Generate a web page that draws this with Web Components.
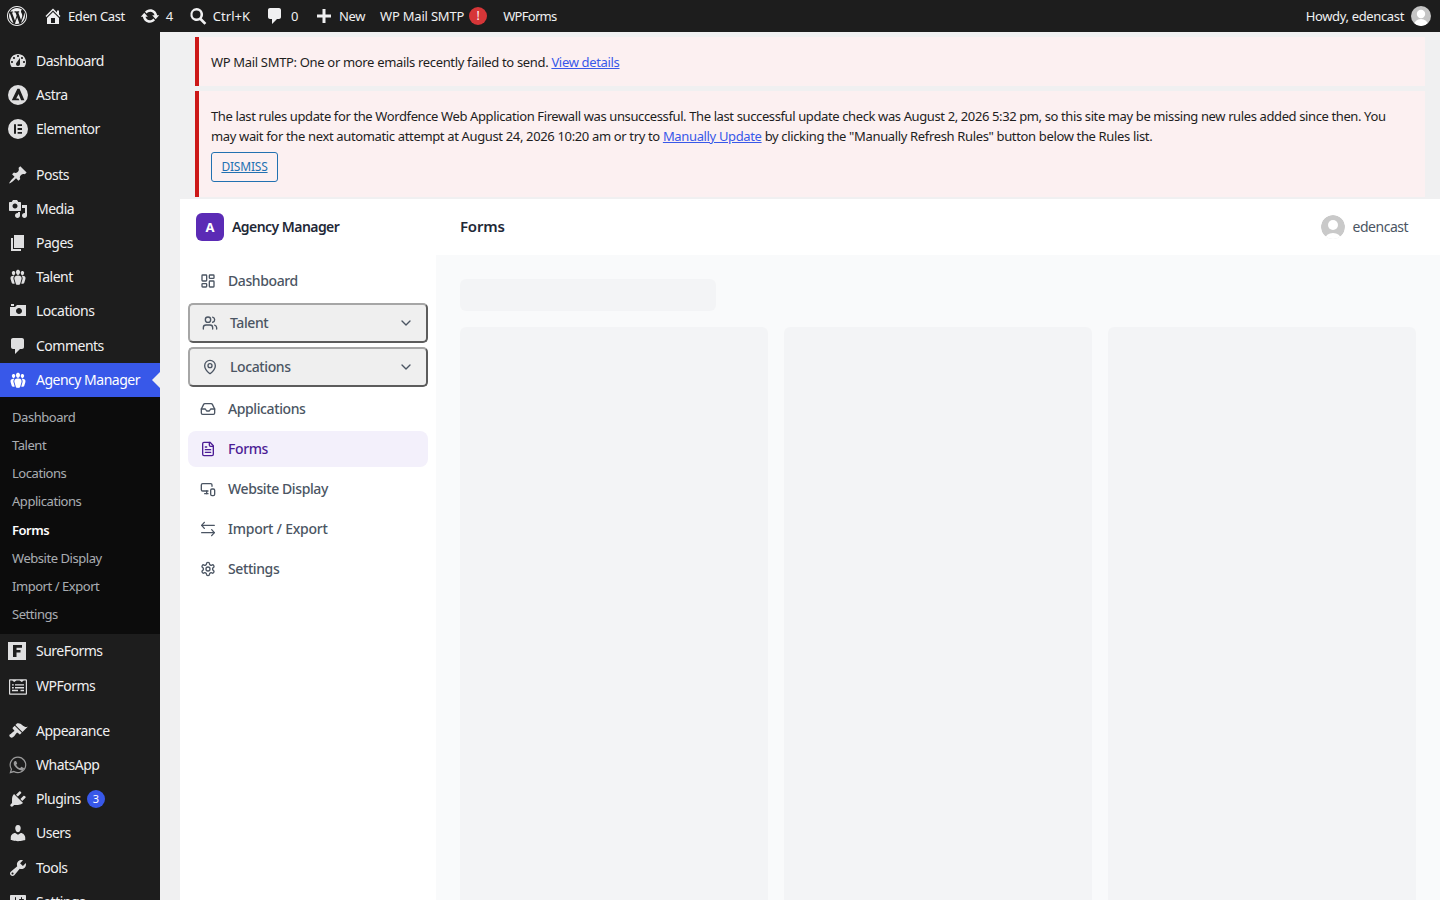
<!DOCTYPE html>
<html lang="en">
<head>
<meta charset="utf-8">
<title>Forms</title>
<style>
  html, body { margin: 0; padding: 0; height: 100%; overflow: hidden; background: #f0f0f1; }
  body { font-family: "Noto Sans", "Open Sans", sans-serif; font-size: 13px; color: #3c434a; }
  #wrap { display: grid; grid-template-columns: 160px 1fr; grid-template-rows: 32px 868px; height: 900px; overflow: hidden; }
  wp-adminbar { grid-column: 1 / 3; }
</style>
</head>
<body>
<div id="wrap">
  <wp-adminbar></wp-adminbar>
  <wp-adminmenu></wp-adminmenu>
  <main>
    <wp-notice>WP Mail SMTP: One or more emails recently failed to send. <a href="#">View details</a></wp-notice>
    <wp-notice dismiss>The last rules update for the Wordfence Web Application Firewall was unsuccessful. The last successful update check was August 2, 2026 5:32 pm, so this site may be missing new rules added since then. You<br><span style="letter-spacing:-.35px">may wait for the next automatic attempt at August 24, 2026 10:20 am or try to <a href="#" style="color:#3858e9">Manually Update</a> by clicking the "Manually Refresh Rules" button below the Rules list.</span></wp-notice>
    <agency-app></agency-app>
  </main>
</div>
<script>
// dashicons used in the wp chrome, 20x20 box
const DASH = {
  wp: 'M20 10c0-5.52-4.48-10-10-10S0 4.48 0 10s4.48 10 10 10 10-4.48 10-10zM10 1.01c4.97 0 8.99 4.02 8.99 8.99s-4.02 8.99-8.99 8.99S1.01 14.97 1.01 10 5.03 1.01 10 1.01zM8.01 14.82L4.96 6.61c.49-.03 1.05-.08 1.05-.08.43-.05.38-1.01-.06-.99 0 0-1.29.1-2.13.1-.15 0-.33 0-.52-.01 1.44-2.17 3.9-3.6 6.7-3.6 2.09 0 3.99.79 5.41 2.09-.6-.08-1.45.35-1.45 1.42 0 .66.38 1.22.79 1.88.31.54.5 1.22.5 2.21 0 1.34-1.27 4.48-1.27 4.48l-2.71-7.5c.48-.03.75-.16.75-.16.43-.05.38-1.1-.05-1.08 0 0-1.3.11-2.14.11-.78 0-2.11-.11-2.11-.11-.43-.02-.48 1.06-.05 1.08l.84.08 1.12 3.04zm6.02 2.15L16.64 10s.67-1.69.39-3.81c.63 1.14.94 2.42.94 3.81 0 2.96-1.56 5.58-3.94 6.97zM2.68 6.77L6.5 17.25c-2.67-1.3-4.47-4.08-4.47-7.25 0-1.16.2-2.23.65-3.23zm7.45 4.53l2.29 6.25c-.75.27-1.57.42-2.42.42-.72 0-1.41-.11-2.06-.3z',
  home: 'M16 8.5l1.53 1.53-1.06 1.06L10 4.62l-6.47 6.47-1.06-1.06L10 2.5l4 4v-2h2v4zm-6-2.46l6 5.99V18H4v-5.97zM12 17v-5H8v5h4z',
  update: 'M10.2 3.28c3.53 0 6.43 2.61 6.92 6h2.08l-3.5 4-3.5-4h2.32c-.45-1.97-2.21-3.45-4.32-3.45-1.45 0-2.73.71-3.54 1.78L4.95 5.66C6.23 4.2 8.11 3.28 10.2 3.28zm-.4 13.44c-3.52 0-6.43-2.61-6.92-6H.8l3.5-4c1.17 1.33 2.33 2.67 3.5 4H5.48c.45 1.97 2.21 3.45 4.32 3.45 1.45 0 2.73-.71 3.54-1.78l1.71 1.95c-1.28 1.46-3.15 2.38-5.25 2.38z',
  search: 'M8.5 2a6.5 6.5 0 0 1 5.25 10.33l4.6 4.6-1.9 1.9-4.6-4.6A6.5 6.5 0 1 1 8.5 2zm0 2.5a4 4 0 1 0 0 8 4 4 0 0 0 0-8z',
  comment: 'M5 2h9c1.1 0 2 .9 2 2v7c0 1.1-.9 2-2 2h-2l-5 5v-5H5c-1.1 0-2-.9-2-2V4c0-1.1.9-2 2-2z',
  plus: 'M17 8.5v3h-5.5V17h-3v-5.5H3v-3h5.5V3h3v5.5z',
  dashboard: 'M3.76 16h12.48c1.1-1.37 1.76-3.11 1.76-5 0-4.42-3.58-8-8-8s-8 3.58-8 8c0 1.89.66 3.63 1.76 5zM10 4c.55 0 1 .45 1 1s-.45 1-1 1-1-.45-1-1 .45-1 1-1zM6 6c.55 0 1 .45 1 1s-.45 1-1 1-1-.45-1-1 .45-1 1-1zm8 0c.55 0 1 .45 1 1s-.45 1-1 1-1-.45-1-1 .45-1 1-1zm-5.37 5.55L12 7v6c0 1.1-.9 2-2 2s-2-.9-2-2c0-.57.24-1.08.63-1.45zM4 10c.55 0 1 .45 1 1s-.45 1-1 1-1-.45-1-1 .45-1 1-1zm12 0c.55 0 1 .45 1 1s-.45 1-1 1-1-.45-1-1 .45-1 1-1z',
  astra: 'M10 0a10 10 0 1 0 0 20 10 10 0 0 0 0-20zM9.4 3.800h2.100l4.900 11.400h-3.300l-2.500-6.200-2.400 4.400h2.200l1 1.800H3.800z',
  elementor: 'M10 0a10 10 0 1 0 0 20 10 10 0 0 0 0-20zM6 5.200h2v9.600H6zM9.600 5.200H14v1.900H9.600zm0 3.800H14v2H9.600zm0 3.900H14v1.900H9.600z',
  pin: 'M10.44 3.02l1.82-1.82 6.36 6.35-1.83 1.82c-1.05-.68-2.48-.57-3.41.36l-.75.75c-.92.93-1.04 2.35-.35 3.41l-1.83 1.82-2.41-2.41-2.8 2.79c-.42.42-3.38 2.71-3.8 2.29s1.86-3.39 2.28-3.81l2.79-2.79L4.1 9.36l1.83-1.82c1.05.69 2.48.57 3.4-.36l.75-.75c.93-.92 1.05-2.35.36-3.41z',
  media: 'M13 11V4c0-.55-.45-1-1-1h-1.67L9 1H5L3.67 3H2c-.55 0-1 .45-1 1v7c0 .55.45 1 1 1h10c.55 0 1-.45 1-1zM7 4.5c1.38 0 2.5 1.12 2.5 2.5S8.38 9.5 7 9.5 4.5 8.38 4.5 7 5.62 4.5 7 4.5zM14 6h5v10.5c0 1.38-1.12 2.5-2.5 2.5S14 17.88 14 16.5s1.12-2.5 2.5-2.5c.17 0 .34.02.5.05V9h-3V6zm-4 8.05V13h2v3.5c0 1.38-1.12 2.5-2.5 2.5S7 17.88 7 16.5 8.12 14 9.5 14c.17 0 .34.02.5.05z',
  page: 'M6 15V2h10v13H6zm-1 1h8v2H3V5h2v11z',
  groups: 'M8.03 4.46c-.29 1.28.55 3.46 1.97 3.46 1.41 0 2.25-2.18 1.96-3.46-.22-.98-1.08-1.63-1.96-1.63-.89 0-1.74.65-1.97 1.63zm-4.13.9c-.25 1.08.47 2.93 1.67 2.93s1.92-1.85 1.67-2.93c-.19-.83-.92-1.39-1.67-1.39s-1.48.56-1.67 1.39zm8.86 0c-.25 1.08.47 2.93 1.66 2.93 1.2 0 1.92-1.85 1.67-2.93-.19-.83-.92-1.39-1.67-1.39-.74 0-1.47.56-1.66 1.39zm-.59 11.43l1.25-4.3C14.2 10 12.71 8.47 10 8.47c-2.72 0-4.21 1.53-3.44 4.02l1.26 4.3C8.05 17.51 9 18 10 18c.98 0 1.94-.49 2.17-1.21zm-6.1-7.63c-.49.67-.96 1.83-.42 3.59l1.12 3.79c-.34.2-.77.31-1.2.31-.85 0-1.65-.41-1.85-1.03l-1.07-3.65c-.65-2.11.61-3.4 2.92-3.4.27 0 .54.02.79.06-.1.1-.2.22-.29.33zm8.35-.39c2.31 0 3.58 1.29 2.92 3.4l-1.07 3.65c-.2.62-1 1.03-1.85 1.03-.43 0-.86-.11-1.2-.31l1.11-3.77c.55-1.78.08-2.94-.42-3.61-.08-.11-.18-.23-.28-.33.25-.04.51-.06.79-.06z',
  camera: 'M6 5V3H3v2h3zm12 10V4H9L7 6H2v9h16zm-7-8c1.66 0 3 1.34 3 3s-1.34 3-3 3-3-1.34-3-3 1.34-3 3-3z',
  sureforms: 'M0 0h18v18H0zM5 3v12h3.500v-4.500h4V8h-4V5.800H14V3z',
  wpforms: 'M2 2.200h16c.5 0 1 .5 1 1v13.600c0 .5-.5 1-1 1H2c-.5 0-1-.5-1-1V3.200c0-.5.5-1 1-1zm.2 1.200v13.200h15.600V3.400h-2l-2 1.700-2.200-1.700H8.400L6.200 5.100 4.200 3.400zM4 7.200h1.800v1.400H4zm3 0h9v1.400H7zM4 10h1.800v1.400H4zm3 0h9v1.400H7zm-3 2.800h6v1.400H4zm8.500 0H16v1.400h-3.500z',
  brush: 'M14.48 11.06L7.41 3.99l1.5-1.5c.5-.56 2.3-.47 3.51.32 1.21.8 1.43 1.28 2.91 2.1 1.18.64 2.45 1.26 4.45.85zm-.71.71L6.7 4.7 4.93 6.47c-.39.39-.39 1.02 0 1.41l1.06 1.06c.39.39.39 1.03 0 1.42-.6.6-1.43 1.11-2.21 1.69-.35.26-.7.53-1.01.84C1.43 13.23.65 14.45 2.1 15.9s2.67.67 3.99-.65c.31-.31.58-.66.84-1.01.58-.78 1.09-1.61 1.69-2.21.39-.39 1.02-.39 1.41 0l1.06 1.06c.39.39 1.02.39 1.41 0z',
  whatsapp: 'M10 1.500a8.400 8.400 0 0 0-7.200 12.700L1.500 18.500l4.400-1.200A8.400 8.400 0 1 0 10 1.500zm0 1.300a7.100 7.100 0 1 1-3.800 13.100l-.3-.2-2.500.7.700-2.400-.2-.3A7.100 7.100 0 0 1 10 2.800zM7.300 6c-.2 0-.5.1-.7.300-.3.300-.9.900-.9 2.100s.9 2.400 1 2.600c.1.200 1.800 2.800 4.400 3.800 2.100.8 2.600.7 3 .600.500-.100 1.500-.600 1.700-1.200.200-.600.200-1.100.100-1.200-.100-.100-.200-.200-.500-.300l-1.700-.800c-.200-.100-.400-.100-.600.100l-.800 1c-.100.200-.300.200-.600.100-.300-.100-1.100-.400-2-1.200-.800-.700-1.300-1.500-1.400-1.800-.100-.300 0-.400.100-.500l.400-.500.300-.400c.100-.200 0-.300 0-.500l-.800-1.800c-.200-.400-.400-.400-.500-.400z',
  plugins: 'M13.11 4.36L9.87 7.6 8 5.73l3.24-3.24c.35-.34 1.05-.2 1.56.32.52.51.66 1.21.31 1.55zm-8 1.77l.91-1.12 9.01 9.01-1.19.84c-.71.71-2.63 1.16-3.82 1.16H6.140L4.900 17.260c-.59.59-1.54.59-2.12 0-.59-.58-.59-1.53 0-2.12l1.24-1.24v-3.880c0-1.130.4-3.190 1.090-3.890zm7.260 3.970l3.240-3.240c.34-.35 1.040-.21 1.550.31.52.51.66 1.210.31 1.550l-3.240 3.250z',
  users: 'M10 9.250c-2.270 0-2.730-3.440-2.730-3.440C7 4.020 7.820 2 9.970 2c2.160 0 2.980 2.020 2.710 3.810 0 0-.41 3.440-2.680 3.440zm0 2.570L12.720 10c2.390 0 4.520 2.330 4.520 4.530v2.490s-3.650 1.130-7.240 1.130c-3.650 0-7.240-1.130-7.240-1.130v-2.490c0-2.250 1.940-4.480 4.470-4.480z',
  tools: 'M16.680 9.770c-1.340 1.340-3.300 1.670-4.950.99l-5.410 6.520c-.99.99-2.590.99-3.580 0s-.99-2.590 0-3.570l6.520-5.420c-.68-1.650-.35-3.610.99-4.950 1.280-1.280 3.120-1.620 4.720-1.060l-2.890 2.890 2.820 2.820 2.860-2.870c.53 1.580.18 3.390-1.080 4.670zM3.810 16.210c.4.39 1.040.39 1.430 0 .4-.4.4-1.040 0-1.430-.39-.4-1.030-.4-1.430 0-.39.39-.39 1.030 0 1.430z',
  settings: 'M18 16V4c0-.55-.45-1-1-1H3c-.55 0-1 .45-1 1v12c0 .55.45 1 1 1h14c.55 0 1-.45 1-1zM8 11h1c.55 0 1 .45 1 1s-.45 1-1 1H8v1.500c0 .28-.22.5-.5.5s-.5-.22-.5-.5V13H6c-.55 0-1-.45-1-1s.45-1 1-1h1V5.500c0-.28.22-.5.5-.5s.5.220.5.5V11zm5-2h-1c-.55 0-1-.45-1-1s.45-1 1-1h1V5.500c0-.28.22-.5.5-.5s.5.220.5.500V7h1c.55 0 1 .45 1 1s-.45 1-1 1h-1v5.500c0 .28-.22.5-.5.5s-.5-.22-.5-.5V9z'
};
const dash = (name, size = 20) => `<svg width="${size}" height="${size}" viewBox="0 0 20 20" fill="currentColor" aria-hidden="true"><path fill-rule="evenodd" d="${DASH[name]}"/></svg>`;

class WpAdminbar extends HTMLElement {
  constructor() {
    super();
    this.attachShadow({ mode: 'open' });
    this.shadowRoot.innerHTML = `
      <style>
        :host { display: flex; justify-content: space-between; height: 32px; background: #1d1d1d; color: #f0f0f1; font: 13px/32px "Noto Sans", sans-serif; letter-spacing: -.4px; }
        .side { display: flex; align-items: center; }
        .it { display: flex; align-items: center; height: 32px; white-space: nowrap; }
        svg { display: block; flex: none; }
        .alert { width: 18px; height: 18px; border-radius: 50%; background: #d63638; color: #fff; font-size: 12px; line-height: 18px; text-align: center; margin-left: 5px; letter-spacing: 0; }
        .avatar { width: 20px; height: 20px; border-radius: 50%; background: #c4c4c4; overflow: hidden; margin-left: 7px; }
      </style>
      <div class="side">
        <span class="it" style="margin-left:7px;width:30px">${dash('wp')}</span>
        <span class="it" style="margin-left:6px">${dash('home')}<span style="margin-left:5px">Eden Cast</span></span>
        <span class="it" style="margin-left:15px">${dash('update')}<span style="margin-left:6px">4</span></span>
        <span class="it" style="margin-left:15px">${dash('search')}<span style="margin-left:5px;letter-spacing:0">Ctrl+K</span></span>
        <span class="it" style="margin-left:15px">${dash('comment')}<span style="margin-left:6px">0</span></span>
        <span class="it" style="margin-left:16px">${dash('plus')}<span style="margin-left:5px">New</span></span>
        <span class="it" style="margin-left:15px;letter-spacing:-.2px">WP Mail SMTP<span class="alert">!</span></span>
        <span class="it" style="margin-left:16px;letter-spacing:-.7px">WPForms</span>
      </div>
      <div class="side">
        <span class="it" style="letter-spacing:-.35px">Howdy, edencast</span>
        <span class="avatar"><svg width="20" height="20" viewBox="0 0 20 20"><circle cx="10" cy="8" r="4.2" fill="#fff"/><ellipse cx="10" cy="19" rx="7" ry="6" fill="#fff"/></svg></span>
        <span style="width:9px"></span>
      </div>`;
  }
}
customElements.define('wp-adminbar', WpAdminbar);

class WpAdminmenu extends HTMLElement {
  constructor() {
    super();
    this.attachShadow({ mode: 'open' });
    const row = (icon, label, cls = '', extra = '') => `<div class="row ${cls}">${dash(icon)}<span>${label}</span>${extra}</div>`;
    const subs = ['Dashboard', 'Talent', 'Locations', 'Applications', 'Forms', 'Website Display', 'Import / Export', 'Settings'];
    this.shadowRoot.innerHTML = `
      <style>
        :host { display: block; width: 160px; height: 868px; background: #1d1d1d; color: #f0f0f1; overflow: hidden; font: 14px "Noto Sans", sans-serif; letter-spacing: -.5px; padding-top: 12px; box-sizing: border-box; }
        .row { display: flex; align-items: center; height: 34px; padding-left: 8px; gap: 8px; white-space: nowrap; position: relative; }
        .row span:not(.count) { margin-bottom: 2px; }
        .row.tall { height: 35px; }
        .row.lo span { margin-bottom: 1px; }
        .row svg { flex: none; opacity: .92; }
        .dim svg { opacity: .6; }
        .sep { height: 12px; }
        .sep.short { height: 10px; }
        .active { background: #3858e9; color: #fff; }
        .active svg { opacity: 1; }
        .active::after { content: ""; position: absolute; right: 0; top: 50%; margin-top: -8px; border: 8px solid transparent; border-right-color: #f0f0f1; border-left-width: 0; }
        .sub { background: #0c0c0c; padding: 6px 0; }
        .sub div { height: 28px; line-height: 28px; padding-left: 12px; font-size: 13px; color: rgba(240,246,252,.7); letter-spacing: -.45px; }
        .sub .cur { color: #fff; font-weight: 600; height: 29px; line-height: 30px; }
        .count { display: inline-block; width: 18px; height: 18px; border-radius: 50%; background: #3858e9; color: #fff; font-size: 11px; line-height: 18px; text-align: center; margin-left: -2px; letter-spacing: 0; }
      </style>
      ${row('dashboard', 'Dashboard')}
      ${row('astra', 'Astra')}
      ${row('elementor', 'Elementor')}
      <div class="sep"></div>
      ${row('pin', 'Posts')}
      ${row('media', 'Media')}
      ${row('page', 'Pages')}
      ${row('groups', 'Talent')}
      ${row('camera', 'Locations')}
      ${row('comment', 'Comments', 'tall lo')}
      <div class="row active">${dash('groups')}<span>Agency Manager</span></div>
      <div class="sub">${subs.map(s => `<div class="${s === 'Forms' ? 'cur' : ''}">${s}</div>`).join('')}</div>
      ${row('sureforms', 'SureForms', 'tall')}
      ${row('wpforms', 'WPForms', 'tall')}
      <div class="sep short"></div>
      ${row('brush', 'Appearance')}
      ${row('whatsapp', 'WhatsApp', 'dim')}
      ${row('plugins', 'Plugins', '', '<span class="count">3</span>')}
      ${row('users', 'Users')}
      ${row('tools', 'Tools', 'tall lo')}
      ${row('settings', 'Settings')}`;
  }
}
customElements.define('wp-adminmenu', WpAdminmenu);

const noticeTpl = document.createElement('template');
noticeTpl.innerHTML = `
  <style>
    :host { display: block; margin: 5px 15px 0 35px; background: #fcf0f1; border-left: 4px solid #cc1818; padding: 13px 12px 12px; font: 13px/20px "Noto Sans", sans-serif; letter-spacing: -.33px; color: #1e1e1e; }
    :host([dismiss]) { letter-spacing: -.385px; }
    p { margin: 0; padding: 2px 0; }
    ::slotted(a) { color: #3858e9; text-decoration: underline; }
    .dismiss { display: none; margin-top: 4px; margin-bottom: 3px; width: 67px; height: 30px; box-sizing: border-box; border: 1px solid #2271b1; border-radius: 3px; color: #2271b1; text-align: center; line-height: 28px; font-size: 12px; text-decoration: underline; letter-spacing: -.2px; background: #fcf0f1; }
    :host([dismiss]) .dismiss { display: block; }
  </style>
  <p><slot></slot></p>
  <div class="dismiss">DISMISS</div>`;
class WpNotice extends HTMLElement {
  constructor() {
    super();
    this.attachShadow({ mode: 'open' }).appendChild(noticeTpl.content.cloneNode(true));
  }
}
customElements.define('wp-notice', WpNotice);

// lucide style outlines for the plugin's own nav
const OUT = {
  dash: '<rect x="3" y="3" width="7" height="9" rx="1"/><rect x="14" y="3" width="7" height="5" rx="1"/><rect x="14" y="12" width="7" height="9" rx="1"/><rect x="3" y="16" width="7" height="5" rx="1"/>',
  users: '<path d="M16 21v-2a4 4 0 0 0-4-4H6a4 4 0 0 0-4 4v2"/><circle cx="9" cy="7" r="4"/><path d="M22 21v-2a4 4 0 0 0-3-3.87"/><path d="M16 3.13a4 4 0 0 1 0 7.75"/>',
  pin: '<path d="M20 10c0 4.993-5.539 10.193-7.399 11.799a1 1 0 0 1-1.202 0C9.539 20.193 4 14.993 4 10a8 8 0 0 1 16 0"/><circle cx="12" cy="10" r="3"/>',
  inbox: '<polyline points="22 12 16 12 14 15 10 15 8 12 2 12"/><path d="M5.45 5.11 2 12v6a2 2 0 0 0 2 2h16a2 2 0 0 0 2-2v-6l-3.45-6.89A2 2 0 0 0 16.76 4H7.24a2 2 0 0 0-1.79 1.11z"/>',
  file: '<path d="M15 2H6a2 2 0 0 0-2 2v16a2 2 0 0 0 2 2h12a2 2 0 0 0 2-2V7Z"/><path d="M14 2v4a2 2 0 0 0 2 2h4"/><path d="M8 13h8"/><path d="M8 17h8"/><path d="M8 9h2"/>',
  display: '<path d="M18 8V6a2 2 0 0 0-2-2H4a2 2 0 0 0-2 2v7a2 2 0 0 0 2 2h8"/><path d="M10 19v-3.96 3.15"/><path d="M7 19h5"/><rect x="16" y="12" width="6" height="10" rx="2"/>',
  swap: '<path d="M6.500 2 2.500 6.500l4 4.500"/><path d="M2.500 6.500h19"/><path d="m17.500 13 4 4.500-4 4.500"/><path d="M21.500 17.500h-19"/>',
  gear: '<path d="M12.22 2h-.44a2 2 0 0 0-2 2v.18a2 2 0 0 1-1 1.73l-.43.25a2 2 0 0 1-2 0l-.15-.08a2 2 0 0 0-2.73.73l-.22.38a2 2 0 0 0 .73 2.73l.15.1a2 2 0 0 1 1 1.72v.51a2 2 0 0 1-1 1.74l-.15.09a2 2 0 0 0-.73 2.73l.22.38a2 2 0 0 0 2.73.73l.15-.08a2 2 0 0 1 2 0l.43.25a2 2 0 0 1 1 1.73V20a2 2 0 0 0 2 2h.44a2 2 0 0 0 2-2v-.18a2 2 0 0 1 1-1.73l.43-.25a2 2 0 0 1 2 0l.15.08a2 2 0 0 0 2.73-.73l.22-.39a2 2 0 0 0-.73-2.73l-.15-.08a2 2 0 0 1-1-1.74v-.5a2 2 0 0 1 1-1.74l.15-.09a2 2 0 0 0 .73-2.73l-.22-.38a2 2 0 0 0-2.73-.73l-.15.08a2 2 0 0 1-2 0l-.43-.25a2 2 0 0 1-1-1.73V4a2 2 0 0 0-2-2z"/><circle cx="12" cy="12" r="3"/>',
  chev: '<path d="m6 9 6 6 6-6"/>'
};
const out = (name, size = 16) => `<svg width="${size}" height="${size}" viewBox="0 0 24 24" fill="none" stroke="currentColor" stroke-width="2" stroke-linecap="round" stroke-linejoin="round" aria-hidden="true">${OUT[name]}</svg>`;

class NavItem extends HTMLElement {
  connectedCallback() {
    if (this.shadowRoot) return;
    this.attachShadow({ mode: 'open' });
    this.shadowRoot.innerHTML = `
      <style>
        :host { display: flex; align-items: center; gap: 12px; height: 36px; padding: 0 12px; border-radius: 8px; color: #4b5563; font: 500 14px "Noto Sans", sans-serif; letter-spacing: -.4px; }
        :host([active]) { background: #f3f0fb; color: #4c1d95; }
        svg { flex: none; display: block; }
        .l { margin-bottom: 2px; }
      </style>
      ${out(this.getAttribute('icon'))}<span class="l"><slot></slot></span>`;
  }
}
customElements.define('nav-item', NavItem);

class NavGroup extends HTMLElement {
  connectedCallback() {
    if (this.shadowRoot) return;
    this.attachShadow({ mode: 'open' });
    this.shadowRoot.innerHTML = `
      <style>
        :host { display: flex; align-items: center; height: 40px; box-sizing: border-box; padding: 0 12px; gap: 12px; border: 2px solid; border-color: #a6a6a6 #5c5c5c #5c5c5c #a6a6a6; border-radius: 5px; background: #efefef; color: #4b5563; font: 500 14px "Noto Sans", sans-serif; letter-spacing: -.4px; }
        svg { flex: none; display: block; }
        .l { flex: 1; margin-bottom: 2px; }
      </style>
      ${out(this.getAttribute('icon'))}<span class="l"><slot></slot></span>${out('chev')}`;
  }
}
customElements.define('nav-group', NavGroup);

class AgencyApp extends HTMLElement {
  constructor() {
    super();
    this.attachShadow({ mode: 'open' });
    this.shadowRoot.innerHTML = `
      <style>
        :host { display: grid; grid-template-columns: 256px 1fr; margin: 2px 0 0 20px; height: 701px; background: #fff; font-family: "Noto Sans", sans-serif; overflow: hidden; }
        aside { display: flex; flex-direction: column; }
        .brand { display: flex; align-items: center; gap: 8px; height: 56px; padding: 0 16px; box-sizing: border-box; font-size: 14px; font-weight: 600; letter-spacing: -.55px; color: #1f2937; }
        .brand b { font-weight: inherit; margin-bottom: 2px; }
        .logo { width: 28px; height: 28px; border-radius: 6px; background: #5b2bb5; color: #fff; display: grid; place-items: center; font-size: 13px; font-weight: 700; letter-spacing: 0; }
        nav { display: flex; flex-direction: column; gap: 4px; padding: 8px; }
        .main { display: grid; grid-template-rows: 56px 1fr; min-width: 0; }
        header { display: flex; align-items: center; justify-content: space-between; padding: 0 32px 0 24px; }
        h1 { margin: 0 0 2px; font-size: 15px; font-weight: 600; letter-spacing: -.2px; color: #1f2937; }
        .user { display: flex; align-items: center; gap: 8px; font-size: 14px; color: #4b5563; letter-spacing: -.5px; }
        .user svg { display: block; border-radius: 50%; }
        .body { background: #f9fafb; padding: 24px; }
        .sk { background: #f3f4f6; border-radius: 6px; }
        .t { width: 256px; height: 32px; margin-bottom: 16px; }
        .cards { display: grid; grid-template-columns: repeat(3, 308px); gap: 16px; }
        .cards .sk { height: 600px; }
      </style>
      <aside>
        <div class="brand"><span class="logo">A</span><b>Agency Manager</b></div>
        <nav>
          <nav-item icon="dash">Dashboard</nav-item>
          <nav-group icon="users">Talent</nav-group>
          <nav-group icon="pin">Locations</nav-group>
          <nav-item icon="inbox">Applications</nav-item>
          <nav-item icon="file" active>Forms</nav-item>
          <nav-item icon="display">Website Display</nav-item>
          <nav-item icon="swap" style="letter-spacing:-.25px">Import / Export</nav-item>
          <nav-item icon="gear">Settings</nav-item>
        </nav>
      </aside>
      <div class="main">
        <header>
          <h1>Forms</h1>
          <div class="user"><svg width="24" height="24" viewBox="0 0 24 24"><circle cx="12" cy="12" r="12" fill="#c9c9c9"/><circle cx="12" cy="10" r="5" fill="#fff"/><ellipse cx="12" cy="24" rx="8" ry="6" fill="#fff"/></svg><span style="margin-bottom:2px">edencast</span></div>
        </header>
        <div class="body">
          <div class="sk t"></div>
          <div class="cards"><div class="sk"></div><div class="sk"></div><div class="sk"></div></div>
        </div>
      </div>`;
  }
}
customElements.define('agency-app', AgencyApp);
</script>
</body>
</html>
